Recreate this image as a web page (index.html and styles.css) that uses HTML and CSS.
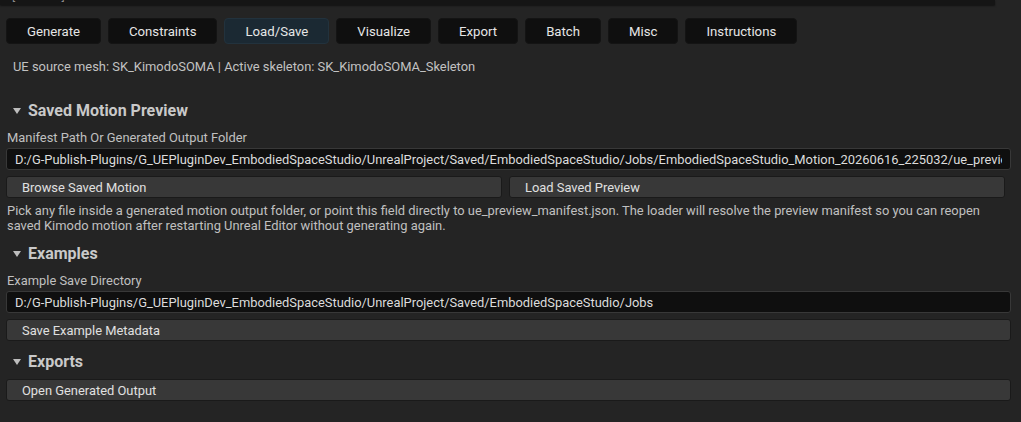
FILE: index.html
```html
<!DOCTYPE html>
<html lang="en">
<head>
  <meta charset="UTF-8">
  <title>Embodied Space Studio - Load/Save</title>
  <link rel="stylesheet" href="styles.css">
</head>
<body>
  <div class="job-strip"><span class="job-label">[Last Job]</span></div>

  <div class="tabs">
    <button class="tab">Generate</button>
    <button class="tab">Constraints</button>
    <button class="tab active">Load/Save</button>
    <button class="tab">Visualize</button>
    <button class="tab">Export</button>
    <button class="tab">Batch</button>
    <button class="tab">Misc</button>
    <button class="tab">Instructions</button>
  </div>

  <p class="status">UE source mesh: SK_KimodoSOMA | Active skeleton: SK_KimodoSOMA_Skeleton</p>

  <div class="section">
    <h2 class="section-title"><span class="arrow"></span>Saved Motion Preview</h2>
    <label class="field-label" for="manifestPath">Manifest Path Or Generated Output Folder</label>
    <input class="path-input" id="manifestPath" type="text" value="D:/G-Publish-Plugins/G_UEPluginDev_EmbodiedSpaceStudio/UnrealProject/Saved/EmbodiedSpaceStudio/Jobs/EmbodiedSpaceStudio_Motion_20260616_225032/ue_preview_manifest.json">
    <div class="button-row">
      <button class="wide-btn">Browse Saved Motion</button>
      <button class="wide-btn">Load Saved Preview</button>
    </div>
    <p class="help">Pick any file inside a generated motion output folder, or point this field directly to ue_preview_manifest.json. The loader will resolve the preview manifest so you can reopen saved Kimodo motion after restarting Unreal Editor without generating again.</p>
  </div>

  <div class="section">
    <h2 class="section-title"><span class="arrow"></span>Examples</h2>
    <label class="field-label" for="exampleDir">Example Save Directory</label>
    <input class="path-input" id="exampleDir" type="text" value="D:/G-Publish-Plugins/G_UEPluginDev_EmbodiedSpaceStudio/UnrealProject/Saved/EmbodiedSpaceStudio/Jobs">
    <button class="wide-btn full">Save Example Metadata</button>
  </div>

  <div class="section">
    <h2 class="section-title"><span class="arrow"></span>Exports</h2>
    <button class="wide-btn full after-title">Open Generated Output</button>
  </div>
</body>
</html>
```

FILE: styles.css
```css
body { margin: 0; background-color: #242424; color: #c0c0c0; font-family: Roboto, "Liberation Sans", sans-serif; font-size: 12.9px; overflow: hidden; }
button, input { font-family: inherit; }

.job-strip { height: 5px; width: 995px; background-color: #151515; overflow: hidden; box-shadow: 0 1px 2px rgba(0,0,0,0.5); }
.job-label { display: block; margin-top: -11px; padding-left: 12px; font-size: 12px; color: #8a8a8a; }

.tabs { display: flex; gap: 7px; padding: 13px 6px 0; }
.tab { height: 26px; padding: 0 20px; background-color: #0f0f0f; color: #e6e6e6; border: 1px solid #141414; border-radius: 4px; font-size: 13.2px; }
.tab.active { background-color: #1b2933; border-color: #22323d; }

.status { margin: 15px 0 27px 13px; color: #c2c2c2; }

.section { padding: 0 10px 0 6px; }
.section-title { display: flex; align-items: center; margin: 11px 0 0 7px; font-size: 16px; font-weight: bold; color: #c9c9c9; }
.arrow { width: 0; height: 0; border-left: 4px solid transparent; border-right: 4px solid transparent; border-top: 6px solid #bdbdbd; margin-right: 7px; }
.field-label { display: block; margin: 10px 0 0 1px; color: #c0c0c0; }
.path-input { display: block; box-sizing: border-box; width: 100%; height: 22px; margin-top: 3px; padding: 0 8px; background-color: #0f0f0f; color: #dcdcdc; border: 1px solid #383838; border-radius: 3px; font-size: 12.9px; }
.button-row { display: flex; gap: 7px; margin-top: 6px; padding-right: 6px; }
.wide-btn { flex: 1; height: 22px; padding: 0 15px; text-align: left; background-color: #383838; color: #e0e0e0; border: 1px solid #1a1a1a; border-radius: 3px; font-size: 12.9px; }
.wide-btn.full { display: block; box-sizing: border-box; width: 100%; margin-top: 6px; }
.wide-btn.after-title { margin-top: 8px; }
.help { margin: 5px 0 0 1px; line-height: 15px; color: #c0c0c0; }
```
